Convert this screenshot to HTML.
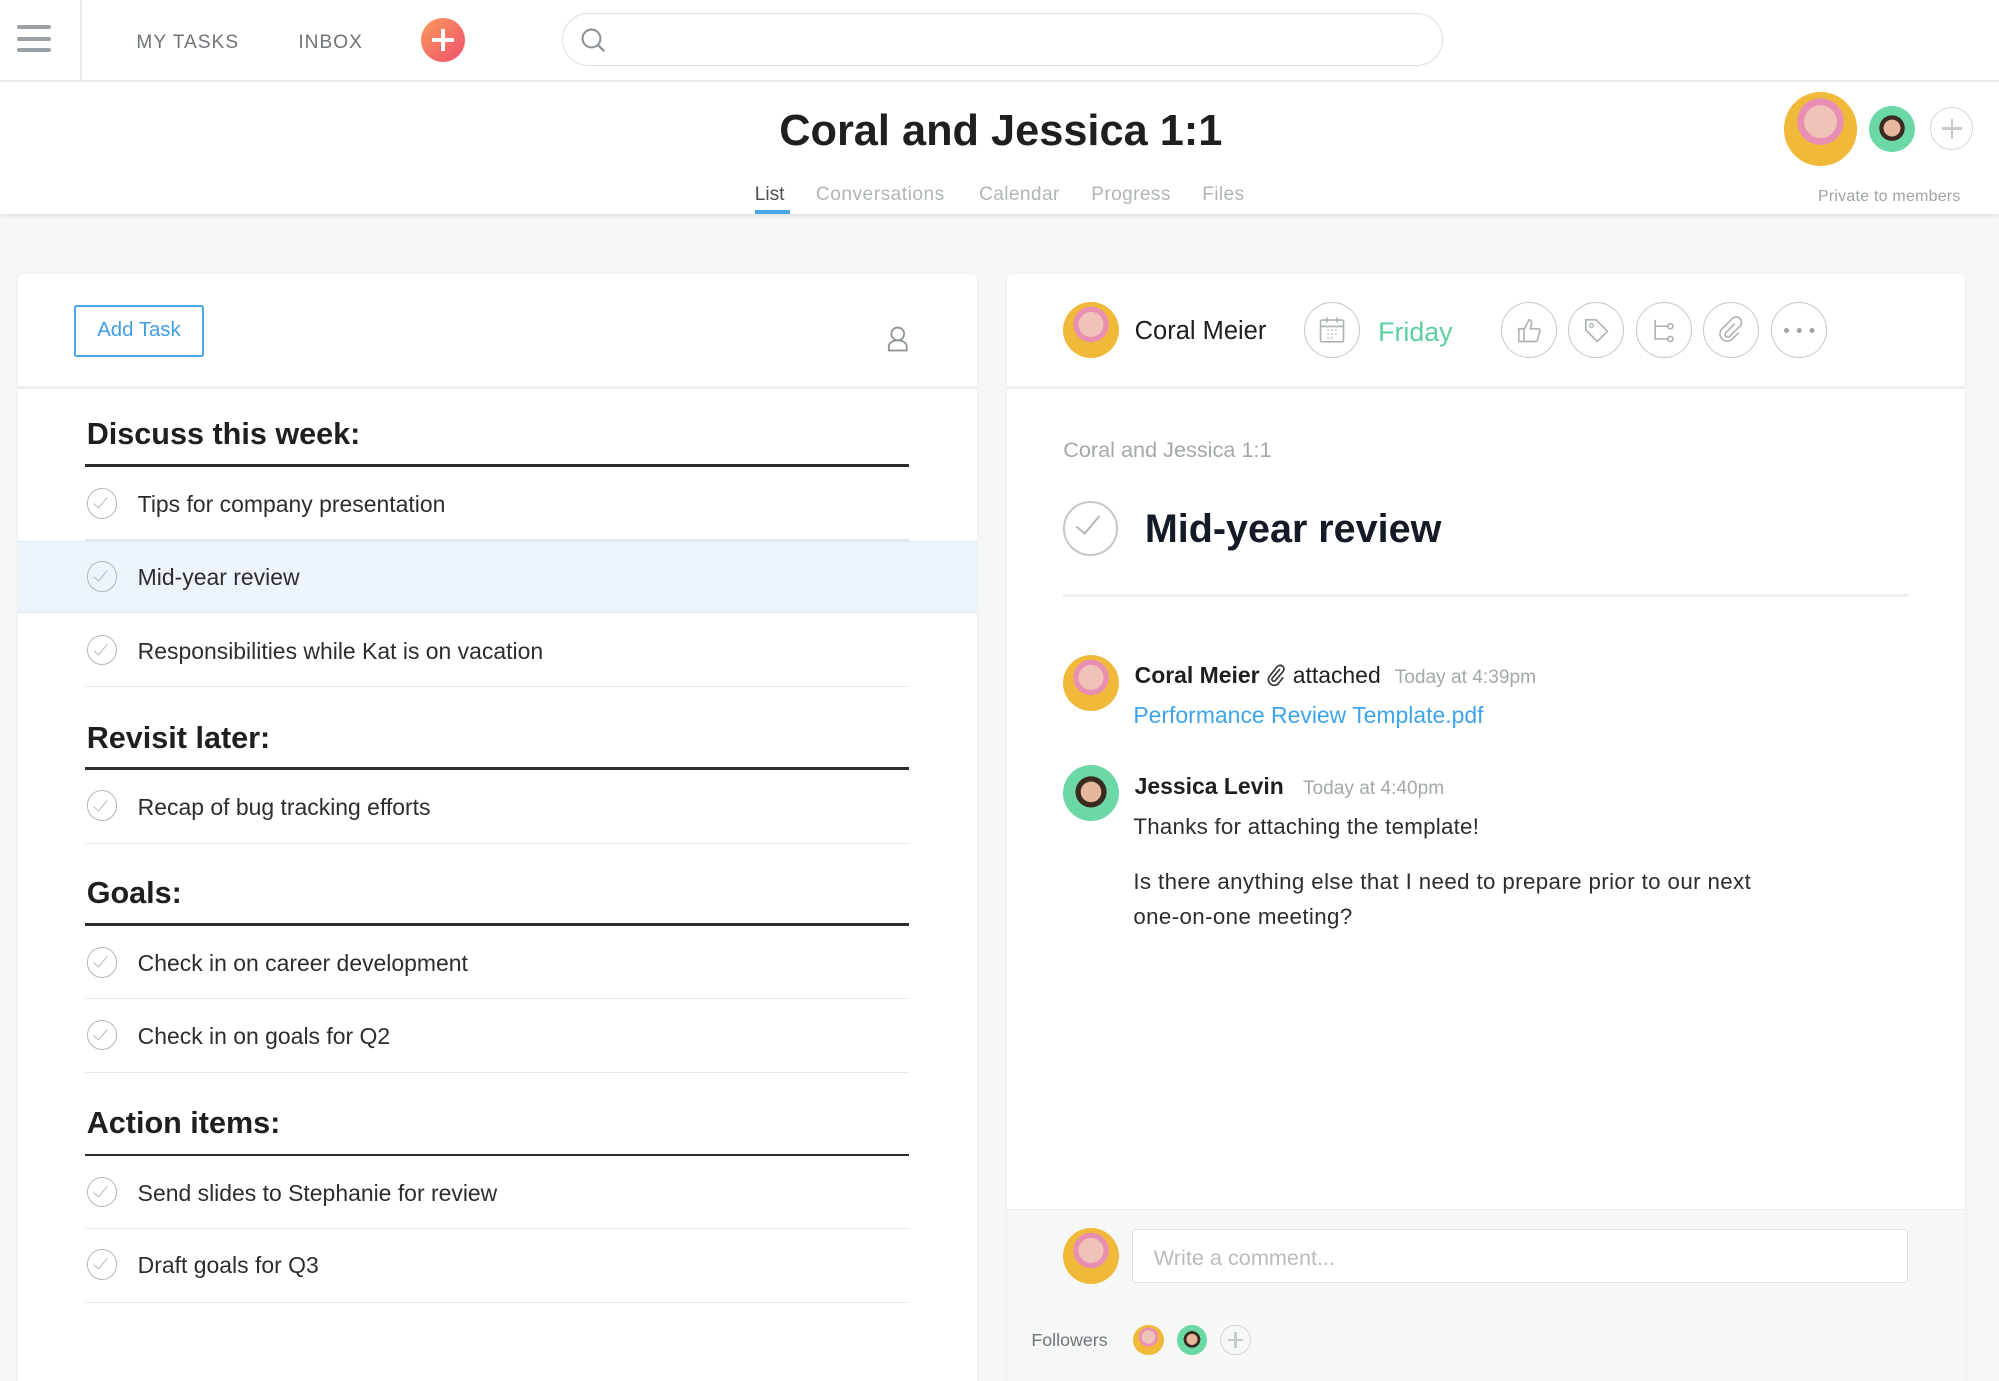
<!DOCTYPE html>
<html><head><meta charset="utf-8"><style>
html,body{margin:0;padding:0;width:1999px;height:1381px;overflow:hidden;background:#f5f6f6}
#w{position:relative;width:1568px;height:1083px;zoom:1.27487;font-family:"Liberation Sans",sans-serif;color:#1e1f21;background:#f5f6f6;overflow:hidden}
.a{position:absolute;white-space:nowrap;line-height:1}
.chk{position:absolute;width:24px;height:24px;border:1.5px solid #b4b8bb;border-radius:50%;box-sizing:border-box}
.chk:after{content:"";position:absolute;left:7px;top:4px;width:5px;height:10px;border-right:1.5px solid #b4b8bb;border-bottom:1.5px solid #b4b8bb;transform:rotate(40deg)}
.h{position:absolute;left:68px;font-size:24px;font-weight:bold;line-height:1}
.hl{position:absolute;left:67px;width:646px;height:2px;background:#2b2d30}
.rl{position:absolute;left:67px;width:646px;height:1px;background:#e6e8ea}
.t{position:absolute;left:108px;font-size:18px;line-height:1;color:#2b2d30}
.circ{position:absolute;width:44px;height:44px;border:1.5px solid #c4c8cb;border-radius:50%;box-sizing:border-box}
.av{position:absolute;border-radius:50%;overflow:hidden}
</style></head><body><div id="w">
<div class="a" style="left:0;top:0;width:1568px;height:64px;background:#fff;border-bottom:2px solid #e8eaec;box-sizing:border-box"></div>
<div class="a" style="left:13px;top:20px;width:27px;height:3px;background:#9aa0a4;border-radius:2px"></div>
<div class="a" style="left:13px;top:29px;width:27px;height:3px;background:#9aa0a4;border-radius:2px"></div>
<div class="a" style="left:13px;top:38px;width:27px;height:3px;background:#9aa0a4;border-radius:2px"></div>
<div class="a" style="left:63px;top:0;width:1px;height:64px;background:#e8eaec"></div>
<div class="a" style="left:107px;top:26px;font-size:15px;color:#6f7478;letter-spacing:.8px">MY TASKS</div>
<div class="a" style="left:234px;top:26px;font-size:15px;color:#6f7478;letter-spacing:.8px">INBOX</div>
<div class="a" style="left:330px;top:14px;width:35px;height:35px;border-radius:50%;background:linear-gradient(135deg,#fb9a5a,#ee4f6d)"></div>
<div class="a" style="left:346px;top:23px;width:3px;height:17px;background:#fff"></div>
<div class="a" style="left:339px;top:30px;width:17px;height:3px;background:#fff"></div>
<div class="a" style="left:441px;top:10px;width:691px;height:42px;border:1.5px solid #dcdfe1;border-radius:22px;box-sizing:border-box;background:#fff"></div>
<svg class="a" style="left:455px;top:21px" width="22" height="22" viewBox="0 0 22 22"><circle cx="9" cy="9" r="7" fill="none" stroke="#8c9296" stroke-width="1.6"/><path d="M14 14l5 5" stroke="#8c9296" stroke-width="1.8"/></svg>
<div class="a" style="left:0;top:64px;width:1568px;height:104px;background:#fff;box-shadow:0 2px 3px rgba(0,0,0,.08)"></div>
<div class="a" style="left:0;width:1568px;top:86px;text-align:center;font-size:34px;font-weight:bold;color:#1e1f21;text-indent:2px">Coral and Jessica 1:1</div>
<div class="a" style="left:592px;top:145px;font-size:15px;color:#4b5053">List</div>
<div class="a" style="left:592px;top:165px;width:28px;height:3px;background:#4aa4e6"></div>
<div class="a" style="left:640px;top:145px;font-size:15px;color:#b0b5b8;letter-spacing:.4px">Conversations</div>
<div class="a" style="left:768px;top:145px;font-size:15px;color:#b0b5b8;letter-spacing:.3px">Calendar</div>
<div class="a" style="left:856px;top:145px;font-size:15px;color:#b0b5b8;letter-spacing:.3px">Progress</div>
<div class="a" style="left:943px;top:145px;font-size:15px;color:#b0b5b8;letter-spacing:.3px">Files</div>
<div class="av" style="left:1399px;top:72px;width:58px;height:58px;background:radial-gradient(circle at 50% 40%,#f0c3b9 0 28%,#e98fb4 29% 40%,#f1b93a 41%)"></div>
<div class="av" style="left:1466px;top:83px;width:36px;height:36px;background:radial-gradient(circle at 50% 48%,#e6b79c 0 25%,#3a2a20 26% 38%,#6bd8a6 39%)"></div>
<div class="a" style="left:1514px;top:84px;width:34px;height:34px;border:1.5px solid #d4d7d9;border-radius:50%;box-sizing:border-box"></div>
<div class="a" style="left:1530px;top:93px;width:2px;height:16px;background:#c8cbcd"></div>
<div class="a" style="left:1523px;top:100px;width:16px;height:2px;background:#c8cbcd"></div>
<div class="a" style="left:1426px;top:148px;font-size:12.5px;color:#9ea3a6;letter-spacing:.2px">Private to members</div>
<div class="a" style="left:14px;top:215px;width:752px;height:880px;background:#fff;border-radius:4px;box-shadow:0 0 2px rgba(0,0,0,.06)"></div>
<div class="a" style="left:14px;top:303px;width:752px;height:2px;background:#eceeef"></div>
<div class="a" style="left:58px;top:239px;width:102px;height:41px;border:2px solid #4aa8e8;border-radius:2px;box-sizing:border-box"></div>
<div class="a" style="left:58px;top:251px;width:102px;text-align:center;font-size:16px;color:#3f9ee4">Add Task</div>
<svg class="a" style="left:694px;top:255px" width="20" height="22" viewBox="0 0 20 22"><circle cx="10" cy="7" r="5" fill="none" stroke="#8c9296" stroke-width="1.4"/><path d="M3 20v-3c0-3 3-5 7-5s7 2 7 5v3z" fill="none" stroke="#8c9296" stroke-width="1.4"/></svg>

<div class="h" style="top:329px">Discuss this week:</div><div class="hl" style="top:364px"></div>
<div class="chk" style="left:68px;top:383px"></div><div class="t" style="top:387px">Tips for company presentation</div><div class="rl" style="top:423px"></div>
<div class="a" style="left:14px;top:424px;width:752px;height:57px;background:#edf4fb;border-top:1px solid #dfe8f2;border-bottom:1px solid #dfe8f2;box-sizing:border-box"></div>
<div class="chk" style="left:68px;top:440px"></div><div class="t" style="top:444px">Mid-year review</div>
<div class="chk" style="left:68px;top:498px"></div><div class="t" style="top:502px">Responsibilities while Kat is on vacation</div><div class="rl" style="top:538px"></div>

<div class="h" style="top:567px">Revisit later:</div><div class="hl" style="top:602px"></div>
<div class="chk" style="left:68px;top:620px"></div><div class="t" style="top:624px">Recap of bug tracking efforts</div><div class="rl" style="top:661px"></div>

<div class="h" style="top:689px">Goals:</div><div class="hl" style="top:724px"></div>
<div class="chk" style="left:68px;top:743px"></div><div class="t" style="top:747px">Check in on career development</div><div class="rl" style="top:783px"></div>
<div class="chk" style="left:68px;top:800px"></div><div class="t" style="top:804px">Check in on goals for Q2</div><div class="rl" style="top:841px"></div>

<div class="h" style="top:869px">Action items:</div><div class="hl" style="top:905px"></div>
<div class="chk" style="left:68px;top:923px"></div><div class="t" style="top:927px">Send slides to Stephanie for review</div><div class="rl" style="top:963px"></div>
<div class="chk" style="left:68px;top:980px"></div><div class="t" style="top:984px">Draft goals for Q3</div><div class="rl" style="top:1021px"></div>

<div class="a" style="left:790px;top:215px;width:751px;height:880px;background:#fff;border-radius:4px;box-shadow:0 0 2px rgba(0,0,0,.06)"></div>
<div class="a" style="left:790px;top:303px;width:751px;height:2px;background:#eceeef"></div>
<div class="av" style="left:834px;top:237px;width:44px;height:44px;background:radial-gradient(circle at 50% 40%,#f0c3b9 0 28%,#e98fb4 29% 40%,#f1b93a 41%)"></div>
<div class="a" style="left:890px;top:250px;font-size:20px;color:#1e1f21">Coral Meier</div>
<div class="circ" style="left:1023px;top:237px"></div>
<svg class="a" style="left:1034px;top:247px" width="22" height="24" viewBox="0 0 22 24"><rect x="2" y="4" width="18" height="17" rx="1" fill="none" stroke="#aeb3b6" stroke-width="1.3"/><path d="M2 9h18M7 2v4M15 2v4" stroke="#aeb3b6" stroke-width="1.3"/><path d="M7 12h2M10 12h2M13 12h2M7 15h2M10 15h2M13 15h2M7 18h2M10 18h2" stroke="#c4c8cb" stroke-width="1"/></svg>
<div class="a" style="left:1081px;top:250px;font-size:21px;color:#5ccf9f">Friday</div>
<div class="circ" style="left:1177px;top:237px"></div>
<svg class="a" style="left:1188px;top:248px" width="22" height="22" viewBox="0 0 22 22"><path d="M3 10h4v10H3zM7 11l4-8c2 0 2 2 2 3l-1 4h6c1 0 2 1 1.5 2l-2 7c-.3 1-1 1-2 1H7" fill="none" stroke="#aeb3b6" stroke-width="1.3"/></svg>
<div class="circ" style="left:1230px;top:237px"></div>
<svg class="a" style="left:1241px;top:248px" width="22" height="22" viewBox="0 0 22 22"><path d="M3 3h8l9 9-8 8-9-9z" fill="none" stroke="#aeb3b6" stroke-width="1.3"/><circle cx="7.5" cy="7.5" r="1.5" fill="none" stroke="#aeb3b6"/></svg>
<div class="circ" style="left:1283px;top:237px"></div>
<svg class="a" style="left:1294px;top:248px" width="22" height="22" viewBox="0 0 22 22"><path d="M4 3v15h10M4 8h10" fill="none" stroke="#aeb3b6" stroke-width="1.3"/><circle cx="16" cy="8" r="2" fill="none" stroke="#aeb3b6" stroke-width="1.3"/><circle cx="16" cy="18" r="2" fill="none" stroke="#aeb3b6" stroke-width="1.3"/></svg>
<div class="circ" style="left:1336px;top:237px"></div>
<svg class="a" style="left:1347px;top:248px" width="22" height="22" viewBox="0 0 22 22"><path d="M14 6l-7 7a2 2 0 0 0 3 3l8-8a4 4 0 0 0-6-6L4 10a5.5 5.5 0 0 0 8 8l5-5" fill="none" stroke="#aeb3b6" stroke-width="1.3"/></svg>
<div class="circ" style="left:1389px;top:237px"></div>
<div class="a" style="left:1399px;top:257px;width:4px;height:4px;border-radius:50%;background:#9ea3a6;box-shadow:10px 0 #9ea3a6,20px 0 #9ea3a6"></div>

<div class="a" style="left:834px;top:344px;font-size:17px;color:#a3a8ab">Coral and Jessica 1:1</div>
<div class="a" style="left:834px;top:393px;width:43px;height:43px;border:2px solid #c4c8cb;border-radius:50%;box-sizing:border-box"></div>
<div class="a" style="left:849px;top:400px;width:8px;height:17px;border-right:2px solid #b4b8bb;border-bottom:2px solid #b4b8bb;transform:rotate(40deg)"></div>
<div class="a" style="left:898px;top:400px;font-size:31px;font-weight:bold;color:#151b26">Mid-year review</div>
<div class="a" style="left:834px;top:466px;width:663px;height:2px;background:#eceeef"></div>

<div class="av" style="left:834px;top:514px;width:44px;height:44px;background:radial-gradient(circle at 50% 40%,#f0c3b9 0 28%,#e98fb4 29% 40%,#f1b93a 41%)"></div>
<div class="a" style="left:890px;top:521px;font-size:18px;color:#1e1f21"><b>Coral Meier</b> <svg width="16" height="18" viewBox="0 0 16 18" style="vertical-align:-3px"><path d="M11 4l-6 7a1.5 1.5 0 0 0 2.3 2l6-7a3 3 0 0 0-4.5-4L2.5 10a4.5 4.5 0 0 0 7 5.5l4-5" fill="none" stroke="#333" stroke-width="1.3"/></svg> attached <span style="font-size:15px;color:#a3a8ab;margin-left:6px">Today at 4:39pm</span></div>
<div class="a" style="left:889px;top:552px;font-size:18px;color:#3ea4e9">Performance Review Template.pdf</div>
<div class="av" style="left:834px;top:600px;width:44px;height:44px;background:radial-gradient(circle at 50% 48%,#e6b79c 0 25%,#3a2a20 26% 38%,#6bd8a6 39%)"></div>
<div class="a" style="left:890px;top:608px;font-size:18px;color:#1e1f21"><b>Jessica Levin</b> <span style="font-size:15px;color:#a3a8ab;margin-left:10px">Today at 4:40pm</span></div>
<div class="a" style="left:889px;top:640px;font-size:17.5px;color:#2b2d30;letter-spacing:.2px">Thanks for attaching the template!</div>
<div class="a" style="left:889px;top:683px;font-size:17.5px;color:#2b2d30;letter-spacing:.3px">Is there anything else that I need to prepare prior to our next</div>
<div class="a" style="left:889px;top:711px;font-size:17.5px;color:#2b2d30;letter-spacing:.3px">one-on-one meeting?</div>

<div class="a" style="left:790px;top:948px;width:751px;height:140px;background:#f6f7f7;border-top:1px solid #eceeef"></div>
<div class="av" style="left:834px;top:963px;width:44px;height:44px;background:radial-gradient(circle at 50% 40%,#f0c3b9 0 28%,#e98fb4 29% 40%,#f1b93a 41%)"></div>
<div class="a" style="left:888px;top:964px;width:609px;height:42px;background:#fff;border:1px solid #dfe2e4;border-radius:3px;box-sizing:border-box"></div>
<div class="a" style="left:905px;top:978px;font-size:17px;color:#b8bcbf">Write a comment...</div>
<div class="a" style="left:809px;top:1045px;font-size:14px;color:#6f7478">Followers</div>
<div class="av" style="left:889px;top:1039px;width:24px;height:24px;background:radial-gradient(circle at 50% 40%,#f0c3b9 0 28%,#e98fb4 29% 40%,#f1b93a 41%)"></div>
<div class="av" style="left:923px;top:1039px;width:24px;height:24px;background:radial-gradient(circle at 50% 48%,#e6b79c 0 25%,#3a2a20 26% 38%,#6bd8a6 39%)"></div>
<div class="a" style="left:957px;top:1039px;width:24px;height:24px;border:1.5px solid #d4d7d9;border-radius:50%;box-sizing:border-box"></div>
<div class="a" style="left:968px;top:1045px;width:2px;height:12px;background:#c8cbcd"></div>
<div class="a" style="left:963px;top:1050px;width:12px;height:2px;background:#c8cbcd"></div>
</div></body></html>
